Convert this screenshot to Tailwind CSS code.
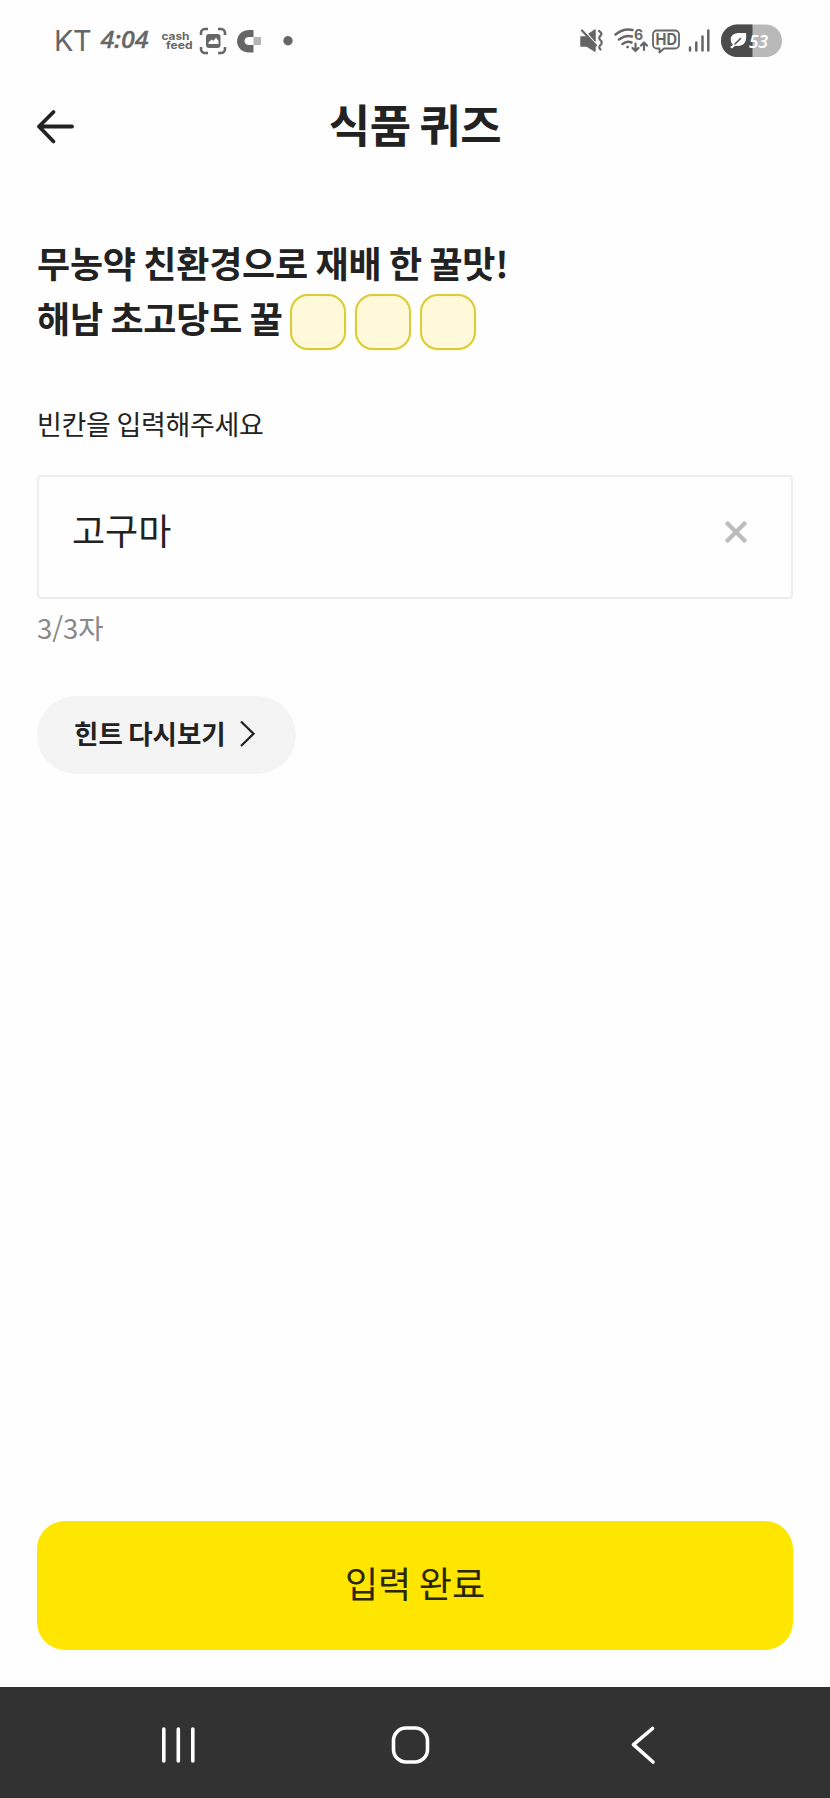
<!DOCTYPE html>
<html lang="ko">
<head>
<meta charset="utf-8">
<title>식품 퀴즈</title>
<script src="https://cdn.jsdelivr.net/npm/@tailwindcss/browser@4"></script>
</head>
<body class="bg-[#fefefe] text-[#222]">
<div class="flex flex-col w-[830px] h-[1798px] font-['Noto_Sans_CJK_KR',sans-serif] whitespace-nowrap">
  <!-- status bar -->
  <header class="flex justify-between items-center h-[82px] shrink-0 pl-[54px] pr-[48px] text-[#666]">
    <div class="flex items-center h-full">
      <span class="w-[46px] font-['Inter'] text-[29px] leading-[36px] tracking-[-0.5px]">KT</span>
      <svg class="w-[52px] h-[82px]" viewBox="100 0 52 82"><text x="100.500" y="48" font-family="Noto Sans" font-style="italic" font-weight="500" font-size="24" fill="#666" stroke="#666" stroke-width=".4" textLength="48" lengthAdjust="spacingAndGlyphs">4:04</text></svg>
      <svg class="w-[46px] h-[82px]" viewBox="152 0 46 82" font-family="Inter" font-weight="700" fill="#666" font-size="10.500"><text x="161.500" y="40" textLength="28" lengthAdjust="spacingAndGlyphs">cash</text><text x="166" y="49" textLength="26.500" lengthAdjust="spacingAndGlyphs">feed</text></svg>
      <svg class="w-[100px] h-[82px]" viewBox="198 0 100 82" fill="none">
        <path d="M201 35v-2a4 4 0 0 1 4-4h3M218 29h3a4 4 0 0 1 4 4v2M225 47v2a4 4 0 0 1-4 4h-3M208 53h-3a4 4 0 0 1-4-4v-2" stroke="#666" stroke-width="2.600"/>
        <rect x="206" y="34" width="14.500" height="14" rx="3" fill="#666"/><path d="M208.500 44v-1.500l3-3 2 1.200 2.500-3 2.500 3V44z" fill="#fefefe"/>
        <path d="M253.500 30v7h-4.500c-6 0-6 8 0 8h4.500v7.500h-4C233 52.500 233 30 249.500 30z" fill="#666"/><rect x="253.500" y="37" width="7.500" height="8" fill="#b5b5b5"/>
        <circle cx="288" cy="40.800" r="4.700" fill="#666"/>
      </svg>
    </div>
    <svg class="w-[204px] h-[82px]" viewBox="578 0 204 82" fill="none" stroke="#666" stroke-width="2.200" stroke-linecap="round" stroke-linejoin="round">
      <path d="M581 37h6l8 8v6l-8-5h-6zM589 34l6-4v11z" fill="#666" stroke-width="1.500"/><path d="M584 30.500l13 14.500" stroke="#fefefe" stroke-width="1.500"/><path d="M582 30.500l14 15"/>
      <path d="M599 31q4 2.500 1.500 4.700t0 4.600 0 4.700 0 4.500"/>
      <path d="M615.500 34.500q8-6.500 17-4.500M619 39.500q6.500-5 13-3M622.500 44q4.500-3.500 9-1.500" stroke-width="2.500"/><circle cx="627.500" cy="47" r=".9" fill="#666" stroke-width="1"/>
      <path d="M635.500 43.500v7.500m-3-3 3 3 3-3M644 50v-7.500m-3 3 3-3 3 3"/>
      <text x="634" y="39.500" font-family="Inter" font-weight="700" font-size="14" fill="#666" stroke="none">6</text>
      <path d="M657 30.500h18a4 4 0 0 1 4 4v10a4 4 0 0 1-4 4h-11l-4.500 4v-4H657a4 4 0 0 1-4-4v-10a4 4 0 0 1 4-4z" stroke-width="1.800"/>
      <text x="655.500" y="45.300" font-family="Inter" font-weight="700" font-size="15.500" fill="#666" stroke="none" textLength="21.500" lengthAdjust="spacingAndGlyphs">HD</text>
      <path d="M690 47.500v3M696.300 42.500v8M702.500 36.500v14M708.300 30.500v20" stroke-width="2.500"/>
      <g stroke="none"><rect x="721" y="24.500" width="61" height="32.500" rx="16.250" fill="#b9b9b9"/><path d="M752.500 24.500h-15.250a16.250 16.250 0 0 0 0 32.500h15.250z" fill="#4c4c4c"/>
      <path d="M746 33h-6c-12 0-10 9-7 12l-3 2 2 1.500 3-2.500c10 1 12-5 11-13z" fill="#fff"/><path d="M735 44l5.500-5.500" stroke="#4c4c4c" stroke-width="1.500"/>
      <text x="749" y="47.500" font-family="Noto Sans" font-style="italic" font-weight="600" font-size="17" fill="#fff" textLength="19" lengthAdjust="spacingAndGlyphs">53</text></g>
    </svg>
  </header>

  <!-- title bar -->
  <div class="flex items-center h-[80px] shrink-0 px-9">
    <svg class="w-[42px] h-[40px] mt-[8px]" viewBox="36 106 42 40" fill="none" stroke="#222" stroke-width="3.800" stroke-linecap="round" stroke-linejoin="round"><path d="M72 126.500H39M53.500 112 39 126.500l14.500 15"/></svg>
    <h1 class="flex-1 mt-[3px] mr-[42px] text-center text-[45px] leading-[64px] font-bold tracking-[-0.300px] [word-spacing:-4px]">식품 퀴즈</h1>
  </div>

  <main class="flex flex-col flex-1 px-[37px] pt-[72px]">
    <h2 class="text-[36px] leading-[56px] font-bold tracking-[-0.200px] [word-spacing:-2.300px]">무농약 친환경으로 재배 한 꿀맛!</h2>
    <div class="flex h-[60px]">
      <span class="w-[253px] text-[36px] leading-[54px] font-bold tracking-[-0.200px] [word-spacing:-2.300px]">해남 초고당도 꿀</span>
      <div class="flex gap-[9px] pt-[4px]">
        <i class="size-[56px] rounded-[18px] border-2 border-[#d9cb3a] bg-[#fff9d9] shadow-[0_0_2px_#fff59a]"></i>
        <i class="size-[56px] rounded-[18px] border-2 border-[#d9cb3a] bg-[#fff9d9] shadow-[0_0_2px_#fff59a]"></i>
        <i class="size-[56px] rounded-[18px] border-2 border-[#d9cb3a] bg-[#fff9d9] shadow-[0_0_2px_#fff59a]"></i>
      </div>
    </div>
    <label class="mt-[54px] text-[27px] leading-[40px] tracking-[-0.300px] [word-spacing:-1.500px]">빈칸을 입력해주세요</label>
    <div class="mt-[31px] flex justify-between h-[124px] border-2 border-[#ededed] rounded-[4px] pl-[33px] pr-[43px]">
      <span class="text-[36px] leading-[104px]">고구마</span>
      <svg class="w-[24px] h-[24px] mt-[43px]" viewBox="0 0 24 24" stroke="#bbb" stroke-width="4.200" stroke-linecap="round"><path d="M3.500 3.500l17 17M20.500 3.500l-17 17"/></svg>
    </div>
    <p class="mt-[8px] text-[27.500px] leading-[40px] text-[#888]">3/3자</p>
    <div class="mt-[49px] flex items-center w-[259px] h-[78px] rounded-full bg-[#f4f4f4] pl-[37px]">
      <span class="w-[164px] text-[26.500px] leading-[40px] font-bold -mt-[5px] [word-spacing:-2px]">힌트 다시보기</span>
      <svg class="w-[18px] h-[28px] -mt-[3px]" viewBox="238 720 18 28" fill="none" stroke="#222" stroke-width="2.300"><path d="M241 721.500l12.500 12.300L241 746"/></svg>
    </div>
    <div class="mt-auto mb-[37px] flex justify-center h-[129px] rounded-[28px] bg-[#ffe600] text-[36px] leading-[123px] text-[#2b2708] [word-spacing:-2.500px]">입력 완료</div>
  </main>

  <!-- system navigation -->
  <nav class="flex items-center h-[111px] shrink-0 bg-[#323232] pl-[160px]">
    <svg class="w-[38px] h-[40px] mt-[5px]" viewBox="160 1725 38 40" stroke="#fff" stroke-width="3.600" stroke-linecap="round"><path d="M163.800 1729v32M178.300 1729v32M192.800 1729v32"/></svg>
    <svg class="ml-[192px] w-[40px] h-[40px] mt-[5px]" viewBox="0 0 40 40" fill="none" stroke="#fff" stroke-width="3.600"><rect x="3.500" y="3" width="34" height="34" rx="12.500"/></svg>
    <svg class="ml-[200px] w-[28px] h-[40px] mt-[5px]" viewBox="630 1725 28 40" fill="none" stroke="#fff" stroke-width="3.600" stroke-linecap="round" stroke-linejoin="round"><path d="M652.500 1728.500 633.500 1744.700l19.500 17.300"/></svg>
  </nav>
</div>
</body>
</html>
